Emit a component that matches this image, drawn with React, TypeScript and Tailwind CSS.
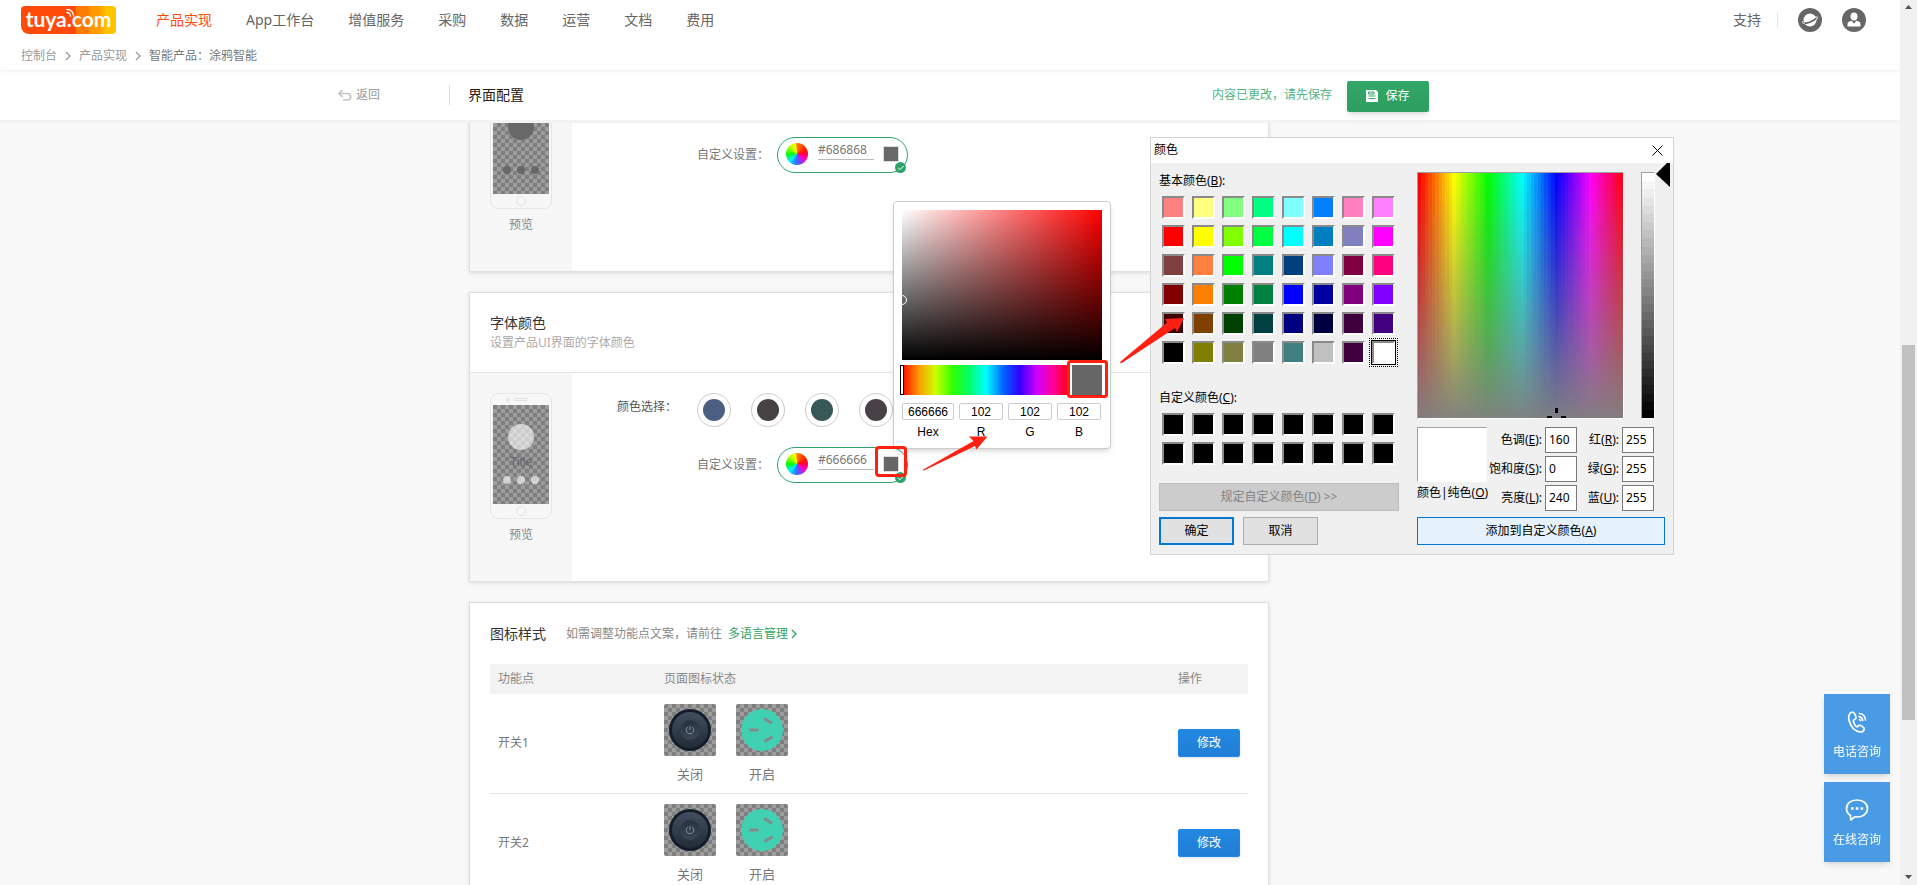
import type { ReactNode } from "react";
import { Check } from "lucide-react";

const NAV = ["App工作台", "增值服务", "采购", "数据", "运营", "文档", "费用"];

const PALETTE = ["bg-[#4c5f83]", "bg-[#474145]", "bg-[#385757]", "bg-[#474145]"];

const BASIC_COLORS = [
  "#ff8080", "#ffff80", "#80ff80", "#00ff80", "#80ffff", "#0080ff", "#ff80c0", "#ff80ff",
  "#ff0000", "#ffff00", "#80ff00", "#00ff40", "#00ffff", "#0080c0", "#8080c0", "#ff00ff",
  "#804040", "#ff8040", "#00ff00", "#008080", "#004080", "#8080ff", "#800040", "#ff0080",
  "#800000", "#ff8000", "#008000", "#008040", "#0000ff", "#0000a0", "#800080", "#8000ff",
  "#400000", "#804000", "#004000", "#004040", "#000080", "#000040", "#400040", "#400080",
  "#000000", "#808000", "#808040", "#808080", "#408080", "#c0c0c0", "#400040", "#ffffff",
];

const CUSTOM_COLORS = Array.from({ length: 16 }, () => "#000000");

const SWITCHES = ["开关1", "开关2"];

// hard-edged gradient with `count` equal bands
function bands(direction: string, count: number, color: (i: number) => string) {
  const stops = Array.from({ length: count }, (_, i) => {
    const from = ((i * 100) / count).toFixed(3);
    const to = (((i + 1) * 100) / count).toFixed(3);
    return `${color(i)} ${from}% ${to}%`;
  });
  return `linear-gradient(${direction}, ${stops.join(", ")})`;
}

const HUE_MAP = [
  bands("to bottom", 60, (i) => `rgba(128,128,128,${(i / 61).toFixed(3)})`),
  bands("to right", 60, (i) => `hsl(${i * 6} 100% 50%)`),
].join(", ");

const LUM_BAR = bands("to bottom", 30, (i) => `hsl(0 0% ${(100 - (i * 100) / 29).toFixed(2)}%)`);

function Logo() {
  return (
    <a
      href="#"
      className="relative flex h-7 w-[95px] items-center justify-center rounded-sm rounded-bl-lg bg-[linear-gradient(90deg,#ff4a0a_0_58%,#ff7a00_58%_70%,#ff9a00_74%_82%,#ffc400_90%)] pb-[2px] font-['Lato',sans-serif] text-[21px] leading-6 font-bold text-white"
    >
      tuya.com
      <svg viewBox="0 0 10 10" className="absolute top-[2px] left-[45px] size-[9px]" fill="none" stroke="#fff" strokeWidth="1.500" strokeLinecap="round">
        <path d="M1 1.500A7.500 7.500 0 0 1 8.500 9" />
        <path d="M1 5A4 4 0 0 1 5 9" />
      </svg>
    </a>
  );
}

function Chevron({ className }: { className: string }) {
  return (
    <svg viewBox="0 0 6 10" className={className} fill="none" stroke="currentColor" strokeWidth="1.300">
      <path d="M1 1l4 4-4 4" />
    </svg>
  );
}

function Header() {
  return (
    <header className="relative z-20 h-[70px] shrink-0 bg-white px-[21px] shadow-[0_1px_3px_rgba(0,0,0,0.08)]">
      <div className="flex h-10 items-center">
        <Logo />
        <nav className="ml-10 flex items-center gap-[34px] text-sm text-[#666]">
          <a href="#" className="text-[#ff4a0a]">产品实现</a>
          {NAV.map((item) => (
            <a key={item} href="#">{item}</a>
          ))}
        </nav>
        <div className="mr-[13px] ml-auto flex items-center text-sm text-[#666]">
          <a href="#">支持</a>
          <span className="mx-4 h-4 w-px bg-[#e5e5e5]" />
          <button type="button" aria-label="语言" className="ml-1">
            <svg viewBox="0 0 24 24" className="size-6">
              <circle cx="12" cy="12" r="12" fill="#666" />
              <circle cx="12" cy="12" r="6.500" fill="#fff" />
              <path d="M4 15c3.500 1.200 12-1.500 15.500-6" fill="none" stroke="#666" strokeWidth="1.600" />
              <path d="M6.500 15.500c-2-.1-2.400-1-1.700-2.200M17 9c2-.4 3-.1 2.500 1-.3.800-1 1.500-2 2.400" fill="none" stroke="#fff" strokeWidth="1" />
            </svg>
          </button>
          <button type="button" aria-label="账号" className="ml-5">
            <svg viewBox="0 0 24 24" className="size-6">
              <circle cx="12" cy="12" r="12" fill="#666" />
              <ellipse cx="12" cy="8.500" rx="3.500" ry="4" fill="#fff" />
              <path d="M5.500 18.500v-2.500c0-2 2-2.800 4-3.200l2.500 2.700 2.500-2.700c2 .4 4 1.200 4 3.200v2.500z" fill="#fff" />
            </svg>
          </button>
        </div>
      </div>
      <div className="flex h-[30px] items-center pt-[2px] text-xs text-[#999]">
        <a href="#">控制台</a>
        <Chevron className="mx-2 h-[10px] w-[6px]" />
        <a href="#">产品实现</a>
        <Chevron className="mx-2 h-[10px] w-[6px]" />
        <span className="text-[#777]">智能产品：涂鸦智能</span>
      </div>
    </header>
  );
}

function SubBar() {
  return (
    <div className="relative z-10 shrink-0 border-b-[3px] border-[#f2f2f2] bg-white">
      <div className="mx-auto flex h-[50px] w-full max-w-[1224px] items-center">
        <div className="flex w-[111px] items-center">
          <a href="#" className="flex items-center gap-1 text-xs text-[#999]">
            <svg viewBox="0 0 14 12" className="h-3 w-[14px]" fill="none" stroke="#c4c4c4" strokeWidth="1.600">
              <path d="M4.500 1L1 4.500 4.500 8M1 4.500h8.500a3.200 3.200 0 0 1 0 6.500H5" />
            </svg>
            返回
          </a>
        </div>
        <span className="h-5 w-px bg-[#ddd]" />
        <h1 className="ml-[18px] text-sm text-[#222]">界面配置</h1>
        <p className="mr-[15px] ml-auto text-xs text-[#52b483]">内容已更改，请先保存</p>
        <button
          type="button"
          className="mt-[2px] mr-[133px] flex h-[31px] w-[82px] items-center justify-center gap-[7px] rounded-xs bg-linear-to-b from-[#32a868] to-[#2d9d60] text-xs text-white shadow-md"
        >
          <svg viewBox="0 0 12 12" className="size-3">
            <path d="M0 0h10l2 2v10H0z" fill="#fff" />
            <path d="M2.500 2h5.500v2H2.500zM2.500 6h7M2.500 8.500h7" stroke="#2fa364" fill="none" />
          </svg>
          保存
        </button>
      </div>
    </div>
  );
}

function Phone({ font }: { font?: boolean }) {
  return (
    <div className="flex w-[102px] shrink-0 flex-col items-center bg-[#f7f7f7] pt-5">
      <div className="flex h-[126px] w-[62px] flex-col items-center rounded-lg border border-[#e6e6e6]">
        <div className="flex h-[11px] items-center gap-1">
          <span className="size-1 rounded-full border border-[#e0e0e0]" />
          <span className="mr-2 h-[3px] w-[14px] rounded-full border border-[#e0e0e0]" />
        </div>
        <div className="flex h-[99px] w-14 flex-col items-center bg-[conic-gradient(#9d9d9d_25%,#7f7f7f_0_50%,#9d9d9d_0_75%,#7f7f7f_0)] bg-size-[8px_8px] pt-[19px]">
          <span className={font ? "size-[26px] rounded-full bg-white/60" : "size-[26px] rounded-full bg-[#686868]"} />
          <span className="h-[26px] pt-1 font-['Liberation_Sans',sans-serif] text-xs text-[#666]">{font && "Title"}</span>
          <div className="flex gap-[6px]">
            {[0, 1, 2].map((i) => (
              <span key={i} className={font ? "size-2 rounded-full bg-white/60" : "size-2 rounded-full bg-[#686868]"} />
            ))}
          </div>
        </div>
        <span className="mt-[2px] size-[10px] rounded-full border border-[#e0e0e0]" />
      </div>
      <span className="mt-[7px] text-xs leading-[18px] text-[#888]">预览</span>
    </div>
  );
}

function CustomColor({ id, value, swatch, children }: { id: string; value: string; swatch: string; children?: ReactNode }) {
  return (
    <div className="flex h-9 items-center">
      <label htmlFor={id} className="w-20 text-xs text-[#777]">自定义设置：</label>
      <div className="relative flex h-9 w-[131px] items-center rounded-full border border-[#2fa36c] bg-white pl-2">
        <span className="mb-[3px] size-[22px] rounded-full bg-[conic-gradient(#ff8000,#ff2000_60deg,#ff0040_90deg,#ff00c8_125deg,#8040ff_160deg,#2080ff_190deg,#00f0ff_225deg,#00ff00_270deg,#b0ff00_315deg,#ffff00_350deg,#ff8000)]" />
        <input
          id={id}
          defaultValue={value}
          className="mb-2 ml-[10px] h-[18px] w-14 border-b border-[#bbb] pb-[2px] text-xs leading-4 text-[#777] outline-none"
        />
        <button type="button" aria-label="选择颜色" className={`mb-[3px] ml-[9px] size-4 border border-[#ddd] ${swatch}`} />
        <span className="absolute right-px -bottom-px flex size-[11px] items-center justify-center rounded-full bg-[#2fa36c] text-white">
          <Check className="size-2" strokeWidth={3} />
        </span>
        {children}
      </div>
    </div>
  );
}

const PICKER_FIELDS = [
  { label: "R", value: "102" },
  { label: "G", value: "102" },
  { label: "B", value: "102" },
];

function ColorPicker() {
  return (
    <div className="absolute bottom-[33px] left-[115px] z-10 h-[248px] w-[218px] rounded-sm border border-[#ccc] bg-white px-2 pt-2 text-black shadow-md">
      <div className="relative h-[150px] w-[200px] bg-[linear-gradient(to_top,#000,transparent),linear-gradient(to_right,#fff,#f00)]">
        <span className="absolute top-[85px] -left-[5px] size-[10px] rounded-full border border-white" />
      </div>
      <div className="mt-[5px] flex h-[30px] justify-between">
        <div className="relative w-[168px] bg-[linear-gradient(to_right,#f00,#f90,#cf0,#3f0,#0f6,#0ff,#06f,#30f,#c0f,#f09,#f00)]">
          <span className="absolute -left-[2px] h-full w-1 border border-black bg-white" />
        </div>
        <span className="w-[30px] bg-[#666]" />
      </div>
      <div className="mt-2 flex gap-[5px] font-['Liberation_Sans',sans-serif] text-xs">
        <label className="flex w-[52px] flex-col items-center">
          <input defaultValue="666666" className="h-[17px] w-full rounded-xs border border-[#ccc] text-center" />
          <span className="mt-1">Hex</span>
        </label>
        {PICKER_FIELDS.map(({ label, value }) => (
          <label key={label} className="flex w-11 flex-col items-center">
            <input defaultValue={value} className="h-[17px] w-full rounded-xs border border-[#ccc] text-center" />
            <span className="mt-1">{label}</span>
          </label>
        ))}
      </div>
    </div>
  );
}

// red box and arrows drawn over the picker and the system dialog
function Annotations() {
  return (
    <svg viewBox="0 0 320 180" className="pointer-events-none absolute -top-[149px] left-[92px] z-40 h-[180px] w-80 max-w-none" fill="none">
      <path d="M52.500 171L103.500 142 99 137.500 117.500 137.500 106.500 150.500 105 147 54 171.500z" fill="#ff2012" />
      <rect x="198.500" y="62.500" width="38" height="35" rx="2" stroke="#ff2012" strokeWidth="3" />
      <path d="M250 63L297 23.500 295 20 314 19 307 33 305 29 251 64.500z" fill="#ff2012" />
    </svg>
  );
}

function FontColorBody() {
  return (
    <div className="flex h-52">
      <Phone font />
      <div className="flex pt-5 pl-[45px]">
        <h3 className="w-20 text-xs leading-7 text-[#555]">颜色选择：</h3>
        <div className="flex flex-col gap-5">
          <div className="flex gap-5">
            {PALETTE.map((color, i) => (
              <button key={i} type="button" aria-label={`颜色 ${i + 1}`} className="flex size-[34px] items-center justify-center rounded-full border border-[#ccc]">
                <span className={`size-[22px] rounded-full ${color}`} />
              </button>
            ))}
          </div>
          <CustomColor id="font-color" value="#666666" swatch="bg-[#666]">
            <ColorPicker />
            <span className="pointer-events-none absolute -top-[2px] left-[97px] z-10 h-[31px] w-8 rounded-sm border-[3px] border-[#ff2012]" />
            <Annotations />
          </CustomColor>
        </div>
      </div>
    </div>
  );
}

function SwitchIcon() {
  return (
    <svg viewBox="0 0 52 52" className="size-[52px]">
      <defs>
        <linearGradient id="knob" x2="0" y2="1">
          <stop stopColor="#414e5e" />
          <stop offset="1" stopColor="#222c37" />
        </linearGradient>
        <linearGradient id="cap" x2="0" y2="1">
          <stop stopColor="#28333f" />
          <stop offset="1" stopColor="#3a4756" />
        </linearGradient>
      </defs>
      <circle cx="26" cy="26" r="21" fill="#131d29" />
      <circle cx="26" cy="26" r="18" fill="url(#knob)" />
      <circle cx="26" cy="26" r="10" fill="url(#cap)" />
      <path d="M23.800 23a3.700 3.700 0 1 0 4.400 0M26 22v4" fill="none" stroke="#84909c" />
    </svg>
  );
}

function SocketIcon() {
  return (
    <svg viewBox="0 0 52 52" className="size-[52px]">
      <circle cx="26" cy="26" r="21" fill="#40d0b2" />
      <path d="M13.500 26h9M28 14.500l8 4.800M28.500 37.500l8-4.800" stroke="#858a89" strokeWidth="3" />
    </svg>
  );
}

function IconState({ label, children }: { label: string; children: ReactNode }) {
  return (
    <div className="flex flex-col items-center">
      <div className="size-[52px] overflow-hidden rounded-xs bg-[conic-gradient(#9d9d9d_25%,#7f7f7f_0_50%,#9d9d9d_0_75%,#7f7f7f_0)] bg-size-[8px_8px]">
        {children}
      </div>
      <span className="mt-2 text-[13px] leading-5 text-[#777]">{label}</span>
    </div>
  );
}

function IconTable() {
  return (
    <table className="w-full table-fixed text-left text-xs text-[#777]">
      <thead>
        <tr className="h-[30px] bg-[#f3f3f3] text-[#888]">
          <th className="w-[174px] pl-2 font-normal">功能点</th>
          <th className="font-normal">页面图标状态</th>
          <th className="w-[70px] font-normal">操作</th>
        </tr>
      </thead>
      <tbody>
        {SWITCHES.map((name) => (
          <tr key={name} className="h-[99px] border-b border-[#e6e6e6]">
            <td className="pl-2">{name}</td>
            <td className="pt-[10px] align-top">
              <div className="flex gap-5">
                <IconState label="关闭"><SwitchIcon /></IconState>
                <IconState label="开启"><SocketIcon /></IconState>
              </div>
            </td>
            <td>
              <button type="button" className="h-7 w-[62px] rounded-xs border border-[#1e88f0] bg-linear-to-b from-[#2387e0] to-[#217ed6] text-xs text-white shadow-sm">
                修改
              </button>
            </td>
          </tr>
        ))}
      </tbody>
    </table>
  );
}

function Card({ className = "", children }: { className?: string; children: ReactNode }) {
  return (
    <section className={`border border-[#e0e0e0] bg-white shadow-[0_1px_4px_rgba(0,0,0,0.12)] ${className}`}>
      {children}
    </section>
  );
}

function SwatchGrid({ colors }: { colors: string[] }) {
  return (
    <div className="grid grid-cols-[repeat(8,23px)] gap-x-[7px] gap-y-[6px] pl-[3px]">
      {colors.map((color, i) => (
        <button
          key={i}
          type="button"
          aria-label={color}
          className={`size-[23px] border-2 border-t-[#8a8a8a] border-r-white border-b-white border-l-[#8a8a8a] ${
            color === "#ffffff" ? "ring-1 ring-black outline-1 outline-offset-2 outline-black outline-dotted" : ""
          }`}
          style={{ backgroundColor: color }}
        />
      ))}
    </div>
  );
}

function Field({ name, hotkey, value }: { name: string; hotkey: string; value: string }) {
  const id = `field-${hotkey}`;
  return (
    <>
      <label htmlFor={id} className="flex justify-end self-center whitespace-nowrap">
        {name}(<u>{hotkey}</u>):
      </label>
      <input id={id} defaultValue={value} className="h-[26px] w-8 border border-[#7a7a7a] bg-white px-[3px] pb-[2px]" />
    </>
  );
}

function SystemColorDialog() {
  return (
    <div
      role="dialog"
      aria-label="颜色"
      className="absolute top-[137px] left-[1150px] z-30 w-[524px] border border-[#d4d4d4] bg-[#f0f0f0] text-xs text-black"
    >
      <div className="flex h-[25px] items-center justify-between bg-white pr-[10px] pb-px pl-[3px]">
        <span>颜色</span>
        <button type="button" aria-label="关闭">
          <svg viewBox="0 0 11 11" className="size-[11px]" stroke="#000">
            <path d="M.5.5l10 10M10.500.5l-10 10" />
          </svg>
        </button>
      </div>
      <div className="flex justify-between px-2 pt-[9px] pb-[9px]">
        <div className="w-60">
          <p className="mb-[6px] leading-[18px]">基本颜色(<u>B</u>):</p>
          <SwatchGrid colors={BASIC_COLORS} />
          <p className="mt-[25px] mb-[6px] leading-[18px]">自定义颜色(<u>C</u>):</p>
          <SwatchGrid colors={CUSTOM_COLORS} />
          <button type="button" disabled className="mt-[18px] h-7 w-full border border-[#bfbfbf] bg-[#ccc] text-[#838383]">
            规定自定义颜色(<u>D</u>) &gt;&gt;
          </button>
          <div className="mt-[6px] flex gap-[9px]">
            <button type="button" className="h-7 w-[75px] border-2 border-[#0078d7] bg-[#e1e1e1]">确定</button>
            <button type="button" className="h-7 w-[75px] border border-[#adadad] bg-[#e1e1e1]">取消</button>
          </div>
        </div>
        <div className="w-[248px]">
          <div className="flex h-[247px]">
            <div
              className="relative w-[207px] shrink-0 overflow-hidden border border-t-[#a0a0a0] border-r-white border-b-white border-l-[#a0a0a0]"
              style={{ backgroundImage: HUE_MAP }}
            >
              <svg viewBox="0 0 20 20" className="absolute right-[57px] -bottom-[9px] size-5" fill="#000">
                <path d="M9 1h3v5H9zM1 9h5v3H1zM15 9h5v3h-5z" />
              </svg>
            </div>
            <div
              className="ml-[17px] w-[14px] shrink-0 border border-t-[#a0a0a0] border-r-white border-b-white border-l-[#a0a0a0]"
              style={{ backgroundImage: LUM_BAR }}
            />
            <svg viewBox="0 0 14 24" className="-mt-[9px] ml-px h-6 w-[14px] shrink-0">
              <path d="M14 0v24L0 11 11 0z" fill="#000" />
            </svg>
          </div>
          <div className="mt-2 flex h-[90px]">
            <div className="w-[71px] shrink-0 whitespace-nowrap">
              <div className="h-[55px] w-[70px] border border-t-[#a0a0a0] border-r-white border-b-white border-l-[#a0a0a0] bg-white" />
              <p className="leading-[22px]">颜色|纯色(<u>O</u>)</p>
            </div>
            <div className="grid grid-cols-[54px_32px_39px_32px] content-start gap-[3px]">
              <Field name="色调" hotkey="E" value="160" />
              <Field name="红" hotkey="R" value="255" />
              <Field name="饱和度" hotkey="S" value="0" />
              <Field name="绿" hotkey="G" value="255" />
              <Field name="亮度" hotkey="L" value="240" />
              <Field name="蓝" hotkey="U" value="255" />
            </div>
          </div>
          <button type="button" className="h-7 w-full border border-[#0078d7] bg-[#e5f1fb]">
            添加到自定义颜色(<u>A</u>)
          </button>
        </div>
      </div>
    </div>
  );
}

function ContactButtons() {
  return (
    <div className="fixed right-[27px] bottom-[23px] flex flex-col gap-2 text-xs text-white">
      <button type="button" className="flex h-20 w-[66px] flex-col items-center bg-[#499be6] pt-4 shadow-md">
        <svg viewBox="0 0 24 24" className="size-6" fill="none" stroke="#fff" strokeWidth="1.700" strokeLinejoin="round" strokeLinecap="round">
          <path d="M7.500 2C4 2.500 3 6.500 4.200 11c1.600 6 6.300 11 11 11 2.500 0 4-1.500 4-3.300 0-1.400-3.700-3.700-5-3.400-.9.200-1.200 1.600-2.100 1.600-1.500 0-4-4.700-3.700-6.400.2-1 2.400-1 2.600-2.300C11.200 6.500 9.300 2 7.500 2z" />
          <path d="M14.500 9.500l1 1M14 6.500c2 .3 3.300 1.700 3.700 4M14.500 3.500c3.500.5 5.700 3 6 6.500" />
        </svg>
        <span className="mt-[10px] leading-4">电话咨询</span>
      </button>
      <button type="button" className="flex h-20 w-[66px] flex-col items-center bg-[#499be6] pt-4 shadow-md">
        <svg viewBox="0 0 24 24" className="size-6" fill="none" stroke="#fff" strokeWidth="1.700" strokeLinejoin="round">
          <path d="M12 2C5.800 2 1.500 5.600 1.500 10.500c0 3.100 1.500 5.400 4 6.900L5.700 22l4-3.200c.8.100 1.500.2 2.300.2 6.200 0 10.500-3.700 10.500-8.500S18.200 2 12 2z" />
          <path d="M6 10.500h2.500M10.800 10.500h2.500M15.600 10.500h2.500" strokeWidth="2.500" />
        </svg>
        <span className="mt-[10px] leading-4">在线咨询</span>
      </button>
    </div>
  );
}

function Scrollbar() {
  return (
    <div className="relative z-20 flex w-[17px] shrink-0 flex-col items-center bg-[#f1f1f1]">
      <svg viewBox="0 0 7 4" className="mt-[5px] h-1 w-[7px]"><path d="M0 4l3.500-4L7 4z" fill="#505050" /></svg>
      <div className="mt-[336px] h-[375px] w-[13px] bg-[#c1c1c1]" />
      <svg viewBox="0 0 7 4" className="mt-auto mb-[6px] h-1 w-[7px]"><path d="M0 0h7L3.500 4z" fill="#505050" /></svg>
    </div>
  );
}

export default function App() {
  return (
    <div className="relative flex h-screen overflow-hidden bg-[#f8f8f8] font-['Noto_Sans','Noto_Sans_CJK_SC',sans-serif]">
      <div className="flex min-w-0 flex-1 flex-col">
        <Header />
        <SubBar />
        <main className="min-h-0 flex-1 overflow-hidden">
          <div className="mx-auto w-full max-w-[1224px] pr-[293px] pl-[131px]">
            <Card className="-mt-[61px] mb-5">
              <div className="flex h-52">
                <Phone />
                <div className="pt-[74px] pl-[125px]">
                  <CustomColor id="background-color" value="#686868" swatch="bg-[#686868]" />
                </div>
              </div>
            </Card>
            <Card className="mb-5">
              <div className="h-20 border-b border-[#e6e6e6] px-5 pt-5">
                <h2 className="text-sm leading-5 text-[#333]">字体颜色</h2>
                <p className="text-xs leading-5 text-[#aaa]">设置产品UI界面的字体颜色</p>
              </div>
              <FontColorBody />
            </Card>
            <Card className="px-5">
              <div className="flex h-[61px] items-center text-xs text-[#888]">
                <h2 className="mr-5 text-sm text-[#333]">图标样式</h2>
                如需调整功能点文案，请前往
                <a href="#" className="ml-[6px] flex items-center gap-[3px] text-[#2fa364]">
                  多语言管理
                  <Chevron className="h-[10px] w-[6px]" />
                </a>
              </div>
              <IconTable />
            </Card>
          </div>
        </main>
      </div>
      <Scrollbar />
      <SystemColorDialog />
      <ContactButtons />
    </div>
  );
}
